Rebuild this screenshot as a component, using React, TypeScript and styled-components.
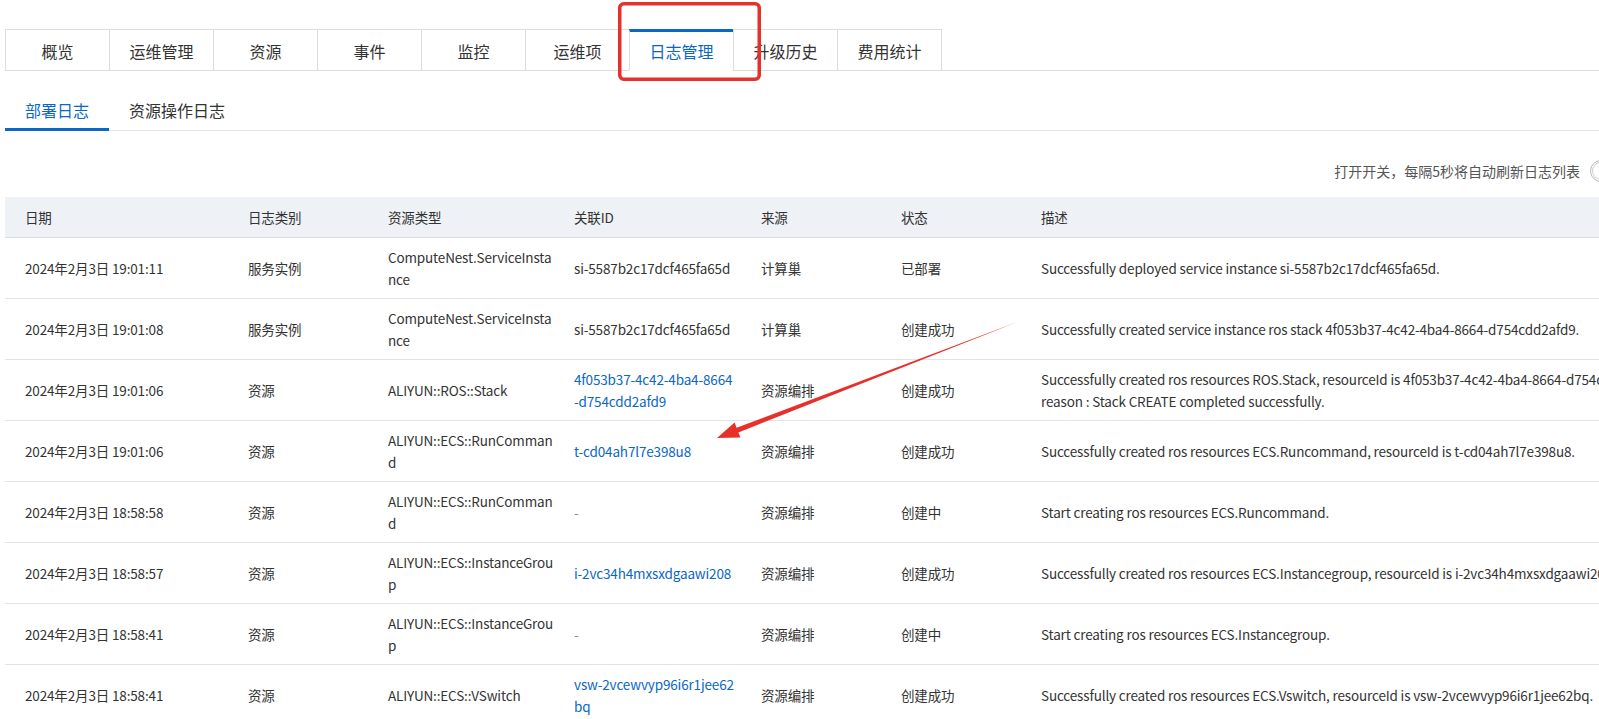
import styled, { createGlobalStyle } from 'styled-components';

const GlobalStyle = createGlobalStyle`
  html, body {
    margin: 0;
    padding: 0;
    overflow: hidden;
    background: #ffffff;
  }
  body {
    font-family: "Noto Sans CJK SC", "Noto Sans", sans-serif;
    color: #333333;
  }
`;

type LogRow = {
  date: string;
  category: string;
  resourceType: string;
  relatedId: string;
  idKind: 'text' | 'link' | 'empty';
  source: string;
  status: string;
  description: string;
};

const mainTabs = ['概览', '运维管理', '资源', '事件', '监控', '运维项', '日志管理', '升级历史', '费用统计'];
const subTabs = ['部署日志', '资源操作日志'];
const columns = ['日期', '日志类别', '资源类型', '关联ID', '来源', '状态', '描述'];
const colWidths = [223, 140, 186, 187, 140, 140, 680];

const rows: LogRow[] = [
  {
    date: '2024年2月3日 19:01:11',
    category: '服务实例',
    resourceType: 'ComputeNest.ServiceInstance',
    relatedId: 'si-5587b2c17dcf465fa65d',
    idKind: 'text',
    source: '计算巢',
    status: '已部署',
    description: 'Successfully deployed service instance si-5587b2c17dcf465fa65d.',
  },
  {
    date: '2024年2月3日 19:01:08',
    category: '服务实例',
    resourceType: 'ComputeNest.ServiceInstance',
    relatedId: 'si-5587b2c17dcf465fa65d',
    idKind: 'text',
    source: '计算巢',
    status: '创建成功',
    description: 'Successfully created service instance ros stack 4f053b37-4c42-4ba4-8664-d754cdd2afd9.',
  },
  {
    date: '2024年2月3日 19:01:06',
    category: '资源',
    resourceType: 'ALIYUN::ROS::Stack',
    relatedId: '4f053b37-4c42-4ba4-8664-d754cdd2afd9',
    idKind: 'link',
    source: '资源编排',
    status: '创建成功',
    description:
      'Successfully created ros resources ROS.Stack, resourceId is 4f053b37-4c42-4ba4-8664-d754cdd2afd9, reason : Stack CREATE completed successfully.',
  },
  {
    date: '2024年2月3日 19:01:06',
    category: '资源',
    resourceType: 'ALIYUN::ECS::RunCommand',
    relatedId: 't-cd04ah7l7e398u8',
    idKind: 'link',
    source: '资源编排',
    status: '创建成功',
    description: 'Successfully created ros resources ECS.Runcommand, resourceId is t-cd04ah7l7e398u8.',
  },
  {
    date: '2024年2月3日 18:58:58',
    category: '资源',
    resourceType: 'ALIYUN::ECS::RunCommand',
    relatedId: '-',
    idKind: 'empty',
    source: '资源编排',
    status: '创建中',
    description: 'Start creating ros resources ECS.Runcommand.',
  },
  {
    date: '2024年2月3日 18:58:57',
    category: '资源',
    resourceType: 'ALIYUN::ECS::InstanceGroup',
    relatedId: 'i-2vc34h4mxsxdgaawi208',
    idKind: 'link',
    source: '资源编排',
    status: '创建成功',
    description: 'Successfully created ros resources ECS.Instancegroup, resourceId is i-2vc34h4mxsxdgaawi208.',
  },
  {
    date: '2024年2月3日 18:58:41',
    category: '资源',
    resourceType: 'ALIYUN::ECS::InstanceGroup',
    relatedId: '-',
    idKind: 'empty',
    source: '资源编排',
    status: '创建中',
    description: 'Start creating ros resources ECS.Instancegroup.',
  },
  {
    date: '2024年2月3日 18:58:41',
    category: '资源',
    resourceType: 'ALIYUN::ECS::VSwitch',
    relatedId: 'vsw-2vcewvyp96i6r1jee62bq',
    idKind: 'link',
    source: '资源编排',
    status: '创建成功',
    description: 'Successfully created ros resources ECS.Vswitch, resourceId is vsw-2vcewvyp96i6r1jee62bq.',
  },
];

const App = () => {
  return (
    <Page>
      <GlobalStyle />
      <TabBar>
        {mainTabs.map(tab => (
          <MainTab key={tab} $active={tab === '日志管理'}>
            {tab}
          </MainTab>
        ))}
      </TabBar>
      <SubTabBar>
        {subTabs.map(tab => (
          <SubTab key={tab} $active={tab === '部署日志'}>
            {tab}
          </SubTab>
        ))}
      </SubTabBar>
      <RefreshRow>
        <span>打开开关，每隔5秒将自动刷新日志列表</span>
        <Switch>
          <Knob />
        </Switch>
      </RefreshRow>
      <LogTable>
        <colgroup>
          {colWidths.map((w, i) => (
            <col key={i} style={{ width: w }} />
          ))}
        </colgroup>
        <thead>
          <tr>
            {columns.map(c => (
              <HeadCell key={c}>{c}</HeadCell>
            ))}
          </tr>
        </thead>
        <tbody>
          {rows.map((r, i) => (
            <tr key={i}>
              <Cell>{r.date}</Cell>
              <Cell>{r.category}</Cell>
              <Cell>{r.resourceType}</Cell>
              <IdCell>
                {r.idKind === 'link' ? (
                  <IdLink>{r.relatedId}</IdLink>
                ) : r.idKind === 'empty' ? (
                  <Dash>-</Dash>
                ) : (
                  r.relatedId
                )}
              </IdCell>
              <Cell>{r.source}</Cell>
              <Cell>{r.status}</Cell>
              <DescCell>{r.description}</DescCell>
            </tr>
          ))}
        </tbody>
      </LogTable>

      {/* red annotation drawn over the screenshot */}
      <Annotation width="1599" height="719" viewBox="0 0 1599 719">
        <rect x="619.75" y="3.75" width="139.5" height="75.5" rx="4" fill="none" stroke="#e8302a" strokeWidth="3.5" />
        <polygon
          points="1020,321 738.4,432.4 740.4,437.6 717,438 734.6,422.6 736.6,427.8"
          fill="#e8302a"
        />
      </Annotation>
    </Page>
  );
};

export default App;

const Page = styled.div`
  position: relative;
  width: 1629px;
  padding: 29px 0 0 5px;
`;

const TabBar = styled.div`
  display: flex;
  border-bottom: 1px solid #dcdcdc;
`;

const MainTab = styled.div<{ $active?: boolean }>`
  display: flex;
  align-items: center;
  justify-content: center;
  box-sizing: border-box;
  width: 105px;
  height: 42px;
  margin-left: -1px;
  margin-bottom: -1px;
  border: 1px solid #dcdcdc;
  border-top: ${p => (p.$active ? '3px solid #0a67c6' : '1px solid #dcdcdc')};
  border-bottom-color: ${p => (p.$active ? '#ffffff' : '#dcdcdc')};
  background: #ffffff;
  font-size: 16px;
  color: ${p => (p.$active ? '#0a67c6' : '#333333')};
  padding-top: ${p => (p.$active ? '0' : '2px')};
  &:first-child {
    margin-left: 0;
  }
`;

const SubTabBar = styled.div`
  display: flex;
  margin-top: 20px;
  border-bottom: 1px solid #e3e3e3;
`;

const SubTab = styled.div<{ $active?: boolean }>`
  display: flex;
  align-items: center;
  box-sizing: border-box;
  height: 40px;
  padding: 0 20px;
  margin-bottom: -1px;
  border-bottom: 3px solid ${p => (p.$active ? '#0a67c6' : 'transparent')};
  font-size: 16px;
  color: ${p => (p.$active ? '#0a67c6' : '#333333')};
`;

const RefreshRow = styled.div`
  display: flex;
  align-items: center;
  justify-content: flex-end;
  gap: 10px;
  height: 22px;
  margin: 29px 0 15px;
  font-size: 14px;
  color: #555555;
`;

const Switch = styled.div`
  position: relative;
  box-sizing: border-box;
  width: 44px;
  height: 22px;
  border: 1px solid #b8b8b8;
  border-radius: 11px;
  background: #ffffff;
`;

const Knob = styled.div`
  position: absolute;
  top: 2px;
  left: 2px;
  width: 16px;
  height: 16px;
  border-radius: 50%;
  background: #ffffff;
  box-shadow: 0 0 0 1px #cfcfcf;
`;

const LogTable = styled.table`
  border-collapse: collapse;
  table-layout: fixed;
  width: 1696px;
  font-size: 13.5px;
  letter-spacing: -0.15px;
`;

const HeadCell = styled.th`
  height: 40px;
  padding: 0 0 0 20px;
  background: #eef1f6;
  border-bottom: 1px solid #d9dde3;
  text-align: left;
  font-weight: normal;
  color: #333333;
`;

const Cell = styled.td`
  padding: 8px 0 8px 20px;
  line-height: 22px;
  vertical-align: middle;
  border-bottom: 1px solid #e3e3e3;
  word-break: break-all;
  color: #333333;
`;

const IdCell = styled(Cell)`
  padding-right: 5px;
`;

const DescCell = styled(Cell)`
  word-break: normal;
  padding-right: 20px;
`;

const IdLink = styled.a`
  color: #0a67c6;
  text-decoration: none;
  cursor: pointer;
`;

const Dash = styled.span`
  color: #888888;
`;

const Annotation = styled.svg`
  position: absolute;
  top: 0;
  left: 0;
  pointer-events: none;
`;
